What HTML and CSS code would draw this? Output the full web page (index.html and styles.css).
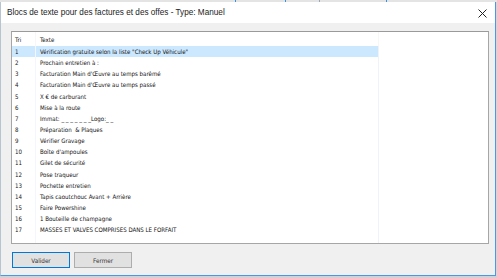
FILE: index.html
```html
<!DOCTYPE html>
<html lang="fr">
<head>
  <meta charset="UTF-8">
  <title>Blocs de texte</title>
  <link rel="stylesheet" href="styles.css">
</head>
<body>
  <div class="behind">
    <span class="tab t1"></span><span class="tab t2"></span><span class="tab t3"></span><span class="tab t4"></span>
  </div>
  <div class="window">
    <div class="titlebar">
      <span class="title">Blocs de texte pour des factures et des offes - Type: Manuel</span>
      <svg class="close" width="9" height="9" viewBox="0 0 9 9">
        <path d="M0.5 0.5 L8.5 8.5 M8.5 0.5 L0.5 8.5" stroke="#222" stroke-width="1" fill="none"/>
      </svg>
    </div>
    <div class="client">
      <div class="listbox">
        <div class="row head"><span class="tri">Tri</span><span class="txt">Texte</span><span class="rest"></span></div>
        <div class="row selected"><span class="tri">1</span><span class="txt">Vérification gratuite selon la liste "Check Up Véhicule"</span><span class="rest"></span></div>
        <div class="row"><span class="tri">2</span><span class="txt">Prochain entretien à :</span><span class="rest"></span></div>
        <div class="row"><span class="tri">3</span><span class="txt">Facturation Main d'Œuvre au temps barêmé</span><span class="rest"></span></div>
        <div class="row"><span class="tri">4</span><span class="txt">Facturation Main d'Œuvre au temps passé</span><span class="rest"></span></div>
        <div class="row"><span class="tri">5</span><span class="txt">X € de carburant</span><span class="rest"></span></div>
        <div class="row"><span class="tri">6</span><span class="txt">Mise à la route</span><span class="rest"></span></div>
        <div class="row"><span class="tri">7</span><span class="txt">Immat: _ _ _ _ _ _ _Logo:_ _</span><span class="rest"></span></div>
        <div class="row"><span class="tri">8</span><span class="txt">Préparation&nbsp; &amp; Plaques</span><span class="rest"></span></div>
        <div class="row"><span class="tri">9</span><span class="txt">Vérifier Gravage</span><span class="rest"></span></div>
        <div class="row"><span class="tri">10</span><span class="txt">Boîte d'ampoules</span><span class="rest"></span></div>
        <div class="row"><span class="tri">11</span><span class="txt">Gilet de sécurité</span><span class="rest"></span></div>
        <div class="row"><span class="tri">12</span><span class="txt">Pose traqueur</span><span class="rest"></span></div>
        <div class="row"><span class="tri">13</span><span class="txt">Pochette entretien</span><span class="rest"></span></div>
        <div class="row"><span class="tri">14</span><span class="txt">Tapis caoutchouc Avant + Arrière</span><span class="rest"></span></div>
        <div class="row"><span class="tri">15</span><span class="txt">Faire Powershine</span><span class="rest"></span></div>
        <div class="row"><span class="tri">16</span><span class="txt">1 Bouteille de champagne</span><span class="rest"></span></div>
        <div class="row"><span class="tri">17</span><span class="txt">MASSES ET VALVES COMPRISES DANS LE FORFAIT</span><span class="rest"></span></div>
        <div class="row filler"><span class="tri"></span><span class="txt"></span><span class="rest"></span></div>
      </div>
      <div class="buttons">
        <button class="btn default">Valider</button>
        <button class="btn">Fermer</button>
      </div>
    </div>
  </div>
  <div class="behind-bottom"></div>
</body>
</html>
```

FILE: styles.css
```css
html, body {
  margin: 0;
  padding: 0;
}
body {
  width: 497px;
  height: 278px;
  overflow: hidden;
  background: #d6d6d6;
  font-family: 'Liberation Sans', Arial, sans-serif;
}
.behind {
  height: 2px;
  background: #e4e4e4;
  display: flex;
}
.behind .tab {
  width: 1px;
  height: 2px;
  background: #9aa7b5;
}
.behind .t1 { margin-left: 235px; background: #3c8ee0; }
.behind .t2 { margin-left: 49px; background: #3c8ee0; }
.behind .t3 { margin-left: 33px; }
.behind .t4 { margin-left: 66px; background: #3c8ee0; }
.window {
  width: 494px;
  height: 273px;
  border-left: 1px solid #b7c4d2;
  border-right: 1px solid #4a98e4;
  border-bottom: 1px solid #4a98e4;
  display: flex;
  flex-direction: column;
  background: #f0f0f0;
}
.titlebar {
  height: 21px;
  background: #ffffff;
  display: flex;
  align-items: center;
  justify-content: space-between;
  padding: 0 8px 0 6px;
}
.title {
  font-family: 'Liberation Sans', Arial, sans-serif;
  font-size: 8.2px;
  color: #1b1b1b;
}
.close {
  margin-top: 1px;
}
.client {
  flex: 1;
  padding: 8px 6px 0 10px;
}
.listbox {
  height: 211px;
  border: 1px solid #a6a6a6;
  border-top-color: #9a9a9a;
  background: #ffffff;
  overflow: hidden;
  font-family: 'DejaVu Sans Condensed', 'DejaVu Sans', sans-serif;
  font-size: 6.1px;
  color: #141414;
}
.row {
  display: grid;
  grid-template-columns: 24px 343px 1fr;
  height: 11.15px;
  line-height: 11.15px;
  white-space: nowrap;
}
.row .tri {
  padding-left: 3px;
  border-right: 1px solid #f3f6fa;
}
.row .txt {
  padding-left: 4px;
  border-right: 1px solid #eef3f9;
}
.row.head {
  height: 14px;
  line-height: 16px;
}
.row.head .tri,
.row.head .txt {
  border-right-color: #f7f7f7;
}
.row.selected .tri,
.row.selected .txt {
  background: #cce8ff;
}
.row.filler {
  height: 20px;
}
.buttons {
  display: flex;
  gap: 4px;
  margin-top: 8px;
  padding-left: 1px;
}
.btn {
  width: 58px;
  height: 16px;
  padding: 0;
  font-family: 'DejaVu Sans Condensed', 'DejaVu Sans', sans-serif;
  font-size: 6.3px;
  color: #333333;
  background: #e1e1e1;
  border: 1px solid #adadad;
}
.btn.default {
  border: 1px solid #0078d7;
  box-shadow: inset 0 0 0 1px #e1e1e1;
}
.behind-bottom {
  height: 2px;
  background: #cfd3d8;
}
```
